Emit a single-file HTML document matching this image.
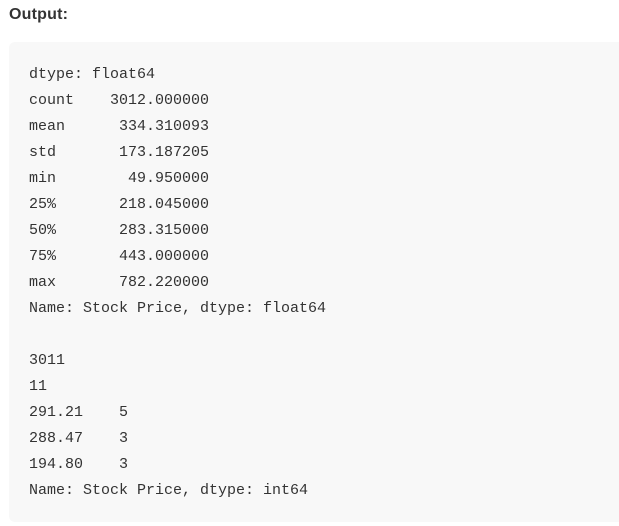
<!DOCTYPE html>
<html><head><style>
body{margin:0;background:#fff;width:619px;height:526px;overflow:hidden;}
h{position:absolute;left:9px;top:6px;font:bold 16px "Liberation Sans Narrow","Liberation Sans",sans-serif;color:#333;letter-spacing:0.2px}
.box{position:absolute;left:9px;top:42px;width:620px;height:480px;background:#f8f8f8;border-radius:6px;}
pre{margin:0;position:absolute;left:29px;top:62px;font:15px/26px "Liberation Mono",monospace;color:#333;}
</style></head><body>
<h>Output:</h>
<div class="box"></div>
<pre>dtype: float64
count    3012.000000
mean      334.310093
std       173.187205
min        49.950000
25%       218.045000
50%       283.315000
75%       443.000000
max       782.220000
Name: Stock Price, dtype: float64

3011
11
291.21    5
288.47    3
194.80    3
Name: Stock Price, dtype: int64</pre>
</body></html>
